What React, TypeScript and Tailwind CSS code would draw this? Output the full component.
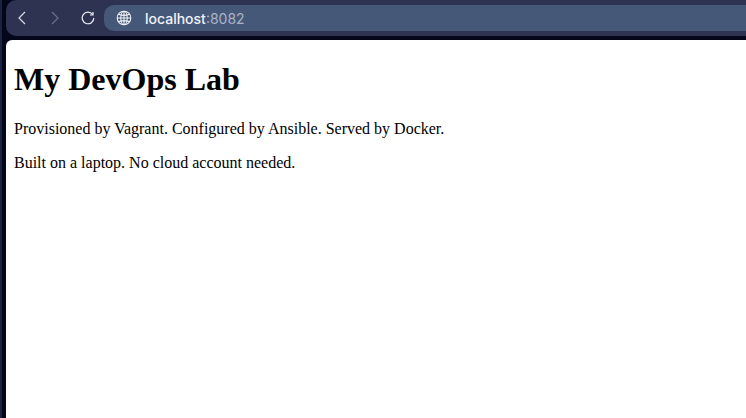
import React from "react";

function Globe() {
  return (
    <svg width="16" height="16" viewBox="0 0 16 16" fill="none" stroke="#f1f3f8" strokeWidth="1.1">
      <circle cx="8" cy="8" r="6.8" />
      <ellipse cx="8" cy="8" rx="3.2" ry="6.8" />
      <path d="M2.6 4.2Q8 6.6 13.4 4.2M2.6 11.8Q8 9.4 13.4 11.8M1.2 8h13.6M8 1.2v13.6" />
    </svg>
  );
}

function Toolbar() {
  return (
    <div className="h-9 flex items-center rounded-l-[10px] bg-[#2d3350] ml-1">
      <button className="w-4 ml-[10px] text-[#d8dce8]">
        <svg width="12" height="16" viewBox="0 0 12 16" fill="none" stroke="currentColor" strokeWidth="1.2">
          <path d="M9 2 3 8l6 6" />
        </svg>
      </button>
      <button className="w-4 ml-[17px] text-[#6a7190]">
        <svg width="12" height="16" viewBox="0 0 12 16" fill="none" stroke="currentColor" strokeWidth="1.2">
          <path d="m3 2 6 6-6 6" />
        </svg>
      </button>
      <button className="ml-[16px]">
        <svg width="14" height="14" viewBox="0 0 14 14" fill="none" stroke="#eef0f6" strokeWidth="1.2">
          <path d="M11.6 3.4A5.8 5.8 0 1 0 12.8 7" />
          <path d="M12 1v3H9" />
        </svg>
      </button>
      <div className="ml-[9px] flex-1 h-[26px] rounded-l-[10px] bg-[#465878] flex items-center pl-3">
        <Globe />
        <span className="ml-[13px] text-[14px] font-medium font-['Inter',sans-serif] text-[#f1f3f8]">
          localhost<span className="font-normal text-[#aab3c7]">:8082</span>
        </span>
      </div>
    </div>
  );
}

export default function App() {
  return (
    <div className="w-[746px] h-[418px] overflow-hidden bg-[#04061a] border-l-2 border-[#1c2340] flex flex-col">
      <Toolbar />
      <div className="flex-1 mt-1 ml-1 rounded-tl-[6px] bg-white text-black px-2 font-['Liberation_Serif',serif]">
        <h1 className="text-[32px] font-bold mt-[21px] mb-[22px] leading-[37px]">My DevOps Lab</h1>
        <p className="text-base leading-[18px] mb-4">Provisioned by Vagrant. Configured by Ansible. Served by Docker.</p>
        <p className="text-base leading-[18px]">Built on a laptop. No cloud account needed.</p>
      </div>
    </div>
  );
}
